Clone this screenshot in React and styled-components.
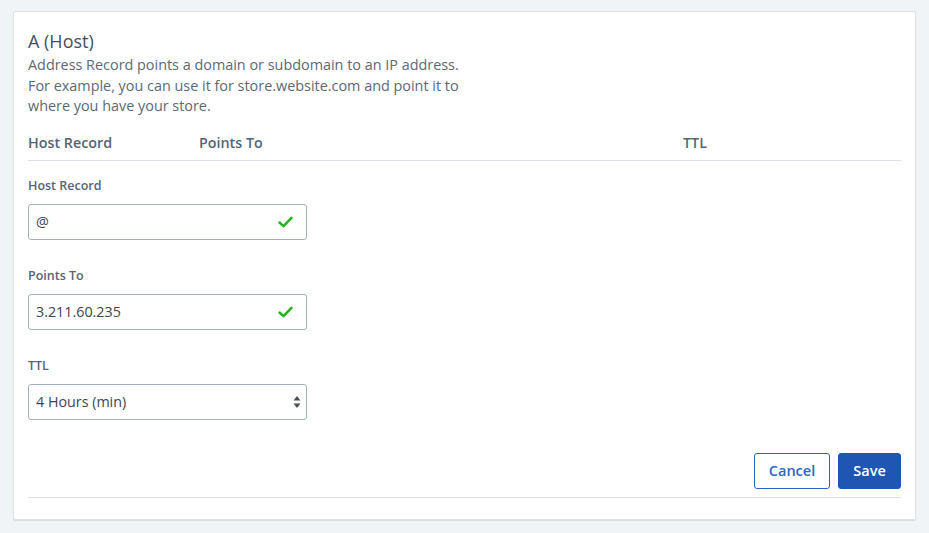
import React from 'react';
import styled, { createGlobalStyle } from 'styled-components';

const GlobalStyle = createGlobalStyle`
  html, body {
    margin: 0;
    padding: 0;
    background: #f1f4f7;
    font-family: 'Open Sans', 'Liberation Sans', sans-serif;
  }
`;

const Page = styled.div`
  padding: 11px 13px 13px;
`;

const Card = styled.div`
  background: #fff;
  border: 1px solid #dde2e8;
  border-radius: 2px;
  box-shadow: 0 1px 1px rgba(0, 0, 0, 0.1);
  padding: 17px 14px 21px;
`;

const Title = styled.h2`
  margin: 0;
  font-size: 18px;
  line-height: 24px;
  font-weight: 400;
  color: #434f60;
`;

const Description = styled.p`
  margin: 2px 0 0;
  max-width: 450px;
  font-size: 14.4px;
  line-height: 20.5px;
  color: #5d6876;
`;

const HeaderRow = styled.div`
  display: grid;
  grid-template-columns: 171px 484px 1fr;
  margin-top: 16px;
  padding-bottom: 7px;
  border-bottom: 1px solid #dcdfe3;
  font-size: 14.3px;
  line-height: 20px;
  font-weight: 600;
  color: #56637a;
`;

const Form = styled.div`
  padding-top: 16px;
`;

const Field = styled.div`
  margin-bottom: ${({ $last }) => ($last ? '33px' : '27px')};
`;

const Label = styled.label`
  display: block;
  font-size: 12.5px;
  line-height: 18px;
  font-weight: 600;
  color: #56637a;
  margin-bottom: 9px;
`;

const Control = styled.div`
  position: relative;
  width: 279px;
  height: 36px;
`;

const Input = styled.input`
  box-sizing: border-box;
  width: 100%;
  height: 100%;
  border: 1px solid #9fb0c3;
  border-radius: 3px;
  padding: 0 36px 0 7px;
  font-family: inherit;
  font-size: 14.3px;
  color: #3c4553;
  background: #fff;
  outline: none;
`;

const Select = styled.select`
  box-sizing: border-box;
  width: 100%;
  height: 100%;
  border: 1px solid #9fb0c3;
  border-radius: 3px;
  padding: 0 28px 0 7px;
  font-family: inherit;
  font-size: 14.3px;
  color: #3c4553;
  background: #fff;
  appearance: none;
  outline: none;
`;

const Adornment = styled.span`
  position: absolute;
  right: ${({ $right }) => $right}px;
  top: 50%;
  transform: translateY(-50%);
  display: flex;
  pointer-events: none;
`;

const Actions = styled.div`
  display: flex;
  justify-content: flex-end;
  gap: 8px;
  padding-bottom: 8px;
  border-bottom: 1px solid #dcdfe3;
`;

const Button = styled.button`
  box-sizing: border-box;
  height: 36px;
  padding: 0;
  width: ${({ $primary }) => ($primary ? '63px' : '76px')};
  border-radius: 3px;
  border: 1px solid ${({ $primary }) => ($primary ? '#1f56b3' : '#2b63c4')};
  background: ${({ $primary }) => ($primary ? '#1f56b3' : '#fff')};
  color: ${({ $primary }) => ($primary ? '#fff' : '#2c66c8')};
  font-family: inherit;
  font-size: 14.5px;
  font-weight: 600;
  cursor: pointer;
`;

const Check = () => (
  <svg width="15" height="12" viewBox="0 0 15 12">
    <path d="M1.5 6.5 L5.5 10.2 L13.5 1.8" fill="none" stroke="#1db515" strokeWidth="2.4" strokeLinecap="round" strokeLinejoin="round" />
  </svg>
);

const Updown = () => (
  <svg width="8" height="14" viewBox="0 0 8 14">
    <path d="M4 1 L7.5 5.5 L0.5 5.5 Z" fill="#4a4f57" />
    <path d="M4 13 L7.5 8.5 L0.5 8.5 Z" fill="#4a4f57" />
  </svg>
);

const App = () => (
  <>
    <GlobalStyle />
    <Page>
      <Card>
        <Title>A (Host)</Title>
        <Description>
          Address Record points a domain or subdomain to an IP address. For example, you can use it for
          store.website.com and point it to where you have your store.
        </Description>
        <HeaderRow>
          <div>Host Record</div>
          <div>Points To</div>
          <div>TTL</div>
        </HeaderRow>
        <Form>
          <Field>
            <Label>Host Record</Label>
            <Control>
              <Input defaultValue="@" />
              <Adornment $right={14}><Check /></Adornment>
            </Control>
          </Field>
          <Field>
            <Label>Points To</Label>
            <Control>
              <Input defaultValue="3.211.60.235" />
              <Adornment $right={14}><Check /></Adornment>
            </Control>
          </Field>
          <Field $last>
            <Label>TTL</Label>
            <Control>
              <Select defaultValue="4h">
                <option value="4h">4 Hours (min)</option>
              </Select>
              <Adornment $right={6}><Updown /></Adornment>
            </Control>
          </Field>
          <Actions>
            <Button>Cancel</Button>
            <Button $primary>Save</Button>
          </Actions>
        </Form>
      </Card>
    </Page>
  </>
);

export default App;
